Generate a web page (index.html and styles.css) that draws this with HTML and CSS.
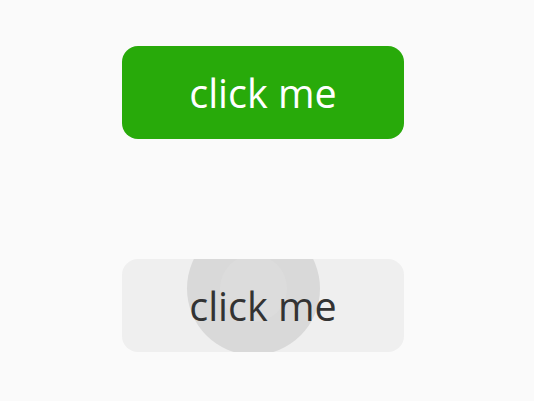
FILE: index.html
```html
<!DOCTYPE html>
<html>
<head>
<meta charset="utf-8">
<link rel="stylesheet" href="styles.css">
</head>
<body>
<div class="page">
  <button class="btn btn-primary">click me</button>
  <button class="btn btn-plain">
    <span class="ripple"><span class="ripple-core"></span></span>
    <span class="label">click me</span>
  </button>
</div>
</body>
</html>
```
FILE: styles.css
```css
html, body {
  margin: 0;
  padding: 0;
  background: #fafafa;
}
.page {
  display: flex;
  flex-direction: column;
  align-items: flex-start;
  gap: 120px;
  padding: 46px 0 0 122px;
}
.btn {
  position: relative;
  overflow: hidden;
  width: 282px;
  height: 93px;
  border: none;
  border-radius: 16px;
  font-family: "Open Sans", sans-serif;
  font-size: 39.5px;
  padding: 0;
  display: flex;
  align-items: center;
  justify-content: center;
}
.btn-primary {
  background: #28aa0a;
  color: #ffffff;
}
.btn-plain {
  background: #efefef;
  color: #333333;
}
.label {
  position: relative;
}
.ripple {
  position: absolute;
  left: 65px;
  top: -37px;
  width: 133px;
  height: 133px;
  border-radius: 50%;
  background: #d9d9d9;
  display: flex;
  align-items: center;
  justify-content: center;
}
.ripple-core {
  width: 67px;
  height: 67px;
  border-radius: 50%;
  background: #dcdcdc;
}
```
